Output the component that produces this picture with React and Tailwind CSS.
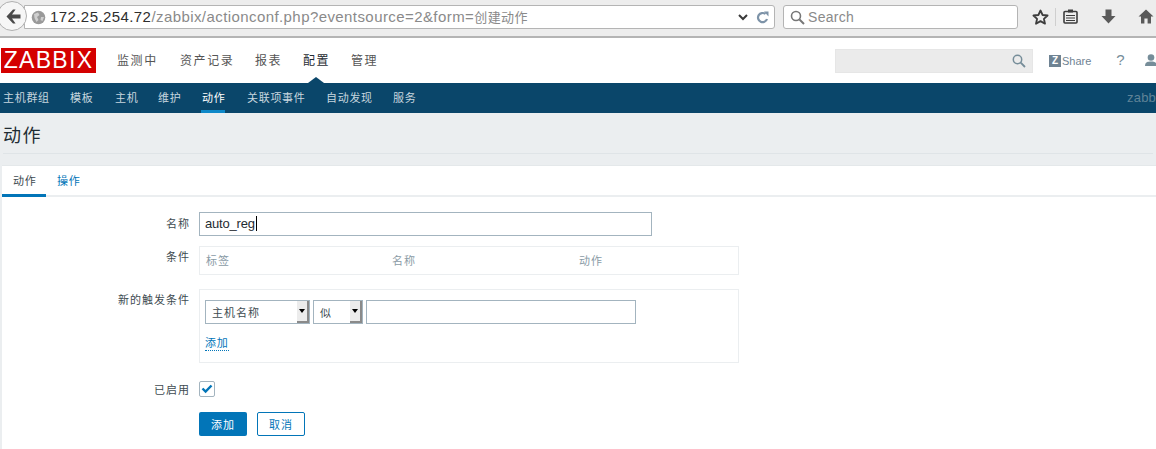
import React from 'react';

const cjk = { fontFamily: '"Noto Sans CJK SC", sans-serif' };

const mainMenu = [
  { label: '监测中', w: 'w-[63px]' },
  { label: '资产记录', w: 'w-[75px]' },
  { label: '报表', w: 'w-[48px]' },
  { label: '配置', w: 'w-[48px]', active: true },
  { label: '管理', w: 'w-[48px]' },
];

const subMenu = [
  { label: '主机群组', w: 'w-[67px]' },
  { label: '模板', w: 'w-[45px]' },
  { label: '主机', w: 'w-[43px]' },
  { label: '维护', w: 'w-[44px]' },
  { label: '动作', w: 'w-[45px]', active: true },
  { label: '关联项事件', w: 'w-[79px]' },
  { label: '自动发现', w: 'w-[67px]' },
  { label: '服务', w: 'w-[40px]' },
];

function Toolbar() {
  return (
    <div className="flex h-[38px] items-start border-b-2 border-[#b4b4b4] bg-[#ededed]">
      {/* back button */}
      <div className="z-10 -ml-[3px] mt-[1px] flex h-[30px] w-[30px] shrink-0 items-center justify-center rounded-full border border-[#b0b0b0] bg-[#f6f6f6]">
        <svg width="15" height="15" viewBox="0 0 15 15" className="ml-[3px]">
          <path d="M7 0.5 L0.5 7.5 L7 14.5 L9.6 14.5 L6 9.5 L14.5 9.5 L14.5 5.5 L6 5.5 L9.6 0.5 Z" fill="#4a4a4a" />
        </svg>
      </div>
      {/* url bar */}
      <div className="-ml-[3px] mt-[5px] flex h-[24px] w-[751px] shrink-0 items-center rounded-r-[3px] border border-[#b4b4b4] bg-white pl-[5px] pr-[3px]">
        <svg width="15" height="15" viewBox="0 0 15 15" className="ml-[1px] shrink-0">
          <circle cx="7.5" cy="7.5" r="6.8" fill="#9a9a9a" />
          <path d="M3 4 L7 2.5 L8.5 5 L6 7 L7.5 10 L5.5 12 L3.5 8 Z M10 7 L13 7 L11.5 11 L9.5 10 Z" fill="#cfcfcf" />
        </svg>
        <div className="ml-[4px] flex-1 whitespace-nowrap text-[15px] tracking-[0.42px] text-[#8a8a8a]" style={{ fontFamily: '"Liberation Sans", "Noto Sans CJK SC", sans-serif' }}>
          <span className="text-[#2e2e2e]">172.25.254.72</span>/zabbix/actionconf.php?eventsource=2&amp;form=<span className="text-[13px]">创建动作</span>
        </div>
        <svg width="10" height="7" viewBox="0 0 10 7" className="mr-[8px] shrink-0">
          <path d="M1 1 L5 5 L9 1" fill="none" stroke="#3a3a3a" strokeWidth="2" />
        </svg>
        <svg width="13" height="13" viewBox="0 0 13 13" className="mr-[2px] shrink-0">
          <path d="M11 8 A4.6 4.6 0 1 1 9.5 3" fill="none" stroke="#7d93a8" strokeWidth="2.2" />
          <path d="M8 0.5 L12.5 0.5 L12.5 5.5 Z" fill="#7d93a8" />
        </svg>
      </div>
      {/* search */}
      <div className="ml-[8px] mt-[5px] flex h-[24px] w-[235px] shrink-0 items-center rounded-[3px] border border-[#b4b4b4] bg-white pl-[6px]">
        <svg width="15" height="15" viewBox="0 0 15 15" className="shrink-0">
          <circle cx="6" cy="6" r="4.5" fill="none" stroke="#777" strokeWidth="1.6" />
          <path d="M9.5 9.5 L14 14" stroke="#777" strokeWidth="2" />
        </svg>
        <span className="ml-[3px] text-[14px] tracking-[0.3px] text-[#8a8a8a]" style={{ fontFamily: '"Liberation Sans", sans-serif' }}>Search</span>
      </div>
      {/* toolbar icons */}
      <svg width="17" height="16" viewBox="0 0 17 16" className="ml-[14px] mt-[9px] shrink-0">
        <path d="M8.5 1.5 L10.6 6 L15.6 6.5 L11.9 9.8 L13 14.7 L8.5 12.1 L4 14.7 L5.1 9.8 L1.4 6.5 L6.4 6 Z" fill="none" stroke="#3c3c3c" strokeWidth="1.8" strokeLinejoin="round" />
      </svg>
      <div className="ml-[6px] mt-[8px] h-[18px] w-px shrink-0 bg-[#cfcfcf]" />
      <svg width="15" height="15" viewBox="0 0 15 15" className="ml-[7px] mt-[9px] shrink-0">
        <rect x="1" y="2.5" width="13" height="11.5" rx="1" fill="none" stroke="#3c3c3c" strokeWidth="1.6" />
        <rect x="5" y="0.5" width="5" height="3" fill="#3c3c3c" />
        <path d="M3 6.5 H12 M3 9 H12 M3 11.5 H12" stroke="#3c3c3c" strokeWidth="1.2" />
      </svg>
      <svg width="15" height="15" viewBox="0 0 15 15" className="ml-[23px] mt-[9px] shrink-0">
        <path d="M4.5 0.5 H10.5 V7 H14.5 L7.5 14.5 L0.5 7 H4.5 Z" fill="#5a5a5a" />
      </svg>
      <svg width="16" height="15" viewBox="0 0 16 15" className="ml-[22px] mt-[9px] shrink-0">
        <path d="M8 0.5 L15.5 7.5 L13 7.5 L13 14.5 L9.6 14.5 L9.6 9.5 L6.4 9.5 L6.4 14.5 L3 14.5 L3 7.5 L0.5 7.5 Z" fill="#5a5a5a" />
      </svg>
    </div>
  );
}

function TopHeader() {
  return (
    <div className="flex h-[45px] items-start bg-white">
      <div className="ml-[1px] mt-[10px] flex h-[25px] w-[95px] shrink-0 items-center justify-center bg-[#d40000] text-[23px] leading-none tracking-[1.3px] text-white" style={{ fontFamily: '"Liberation Sans", sans-serif' }}>
        ZABBIX
      </div>
      <div className="ml-[21px] mt-[10px] flex h-[35px] shrink-0">
        {mainMenu.map((m) => (
          <div key={m.label} className={`relative ${m.w} pt-[3px] text-[12px] leading-[18px] tracking-[1.6px] ${m.active ? 'text-[#1f2c33]' : 'text-[#555]'}`} style={cjk}>
            {m.label}
            {m.active && (
              <div className="absolute bottom-0 left-[5px] h-0 w-0 border-x-[8px] border-b-[6px] border-x-transparent border-b-[#0a466a]" />
            )}
          </div>
        ))}
      </div>
      <div className="ml-[436px] mt-[11px] flex h-[24px] w-[198px] shrink-0 items-center justify-end border border-[#e6e6e6] bg-[#ebebeb] pr-[6px]">
        <svg width="14" height="14" viewBox="0 0 14 14">
          <circle cx="5.5" cy="5.5" r="4.2" fill="none" stroke="#768d99" strokeWidth="1.5" />
          <path d="M8.7 8.7 L13 13" stroke="#768d99" strokeWidth="1.8" />
        </svg>
      </div>
      <div className="ml-[16px] mt-[14px] flex h-[18px] shrink-0 items-center" style={{ fontFamily: '"Liberation Sans", sans-serif' }}>
        <div className="flex h-[12px] w-[12px] items-center justify-center bg-[#6f8393] text-[10px] font-bold leading-none text-white">Z</div>
        <span className="ml-[1px] text-[11px] text-[#6f8393]">Share</span>
      </div>
      <div className="ml-[25px] mt-[12px] shrink-0 text-[15px] leading-[20px] text-[#768d99]" style={{ fontFamily: '"Liberation Sans", sans-serif' }}>?</div>
      <svg width="12" height="13" viewBox="0 0 12 13" className="ml-[20px] mt-[16px] shrink-0">
        <circle cx="6" cy="3.5" r="3.3" fill="#768d99" />
        <path d="M0 12 C0 8 3 7.5 6 7.5 C9 7.5 12 8 12 12 Z" fill="#768d99" />
      </svg>
    </div>
  );
}

function SubNav() {
  return (
    <div className="flex h-[30px] items-stretch justify-between bg-[#0a466a]">
      <div className="ml-[3px] flex shrink-0">
        {subMenu.map((m) => (
          <div key={m.label} className={`${m.w} whitespace-nowrap pt-[6px] text-[11px] leading-[16px] tracking-[0.7px] ${m.active ? 'text-white' : 'text-[#c7d6df]'}`} style={cjk}>
            <span className={`inline-block ${m.active ? '-ml-[1px] h-[24px] w-[24px] border-b-[3px] border-[#0e88c8] pl-[1px]' : ''}`}>{m.label}</span>
          </div>
        ))}
      </div>
      <div className="shrink-0 whitespace-nowrap pt-[7px] text-[13px] leading-[16px] tracking-[0.2px] text-[#5f8397]" style={{ fontFamily: '"Liberation Sans", sans-serif' }}>zabb</div>
    </div>
  );
}

function Row({ label, labelClass, children, className }) {
  return (
    <div className={`flex items-start ${className || ''}`}>
      <div className={`w-[188px] shrink-0 text-right text-[11px] leading-[16px] tracking-[1px] text-[#404b51] ${labelClass || ''}`} style={cjk}>{label}</div>
      <div className="ml-[9px] min-w-0">{children}</div>
    </div>
  );
}

function Select({ label, w }) {
  return (
    <div className={`flex h-[24px] ${w} items-stretch border border-[#a3b4bf] bg-white`}>
      <div className="flex-1 pl-[6px] text-[11px] leading-[22px] tracking-[1px] text-[#404b51]" style={cjk}>{label}</div>
      <div className="flex w-[12px] items-center justify-center border-r-2 border-b-2 border-[#8a8a8a] bg-[#ececec]">
        <div className="h-0 w-0 border-x-[3px] border-t-[4px] border-x-transparent border-t-black" />
      </div>
    </div>
  );
}

function ActionForm() {
  return (
    <div className="ml-[2px] border-t border-[#e4e8ea] bg-white">
      <div className="flex h-[31px] border-b-2 border-[#ebeef0] text-[11px] leading-[16px] tracking-[0.8px]" style={cjk}>
        <div className="h-[31px] w-[44px] border-b-[3px] border-[#0275b8] pl-[11px] pt-[6px] text-[#404b51]">动作</div>
        <div className="pl-[11px] pt-[6px] text-[#0275b8]">操作</div>
      </div>
      <div className="h-[252px] pt-[15px]">
        <Row label="名称" labelClass="pt-[3px]">
          <div className="h-[24px] w-[453px] border border-[#a3b4bf] pl-[5px] text-[13px] leading-[22px] tracking-[-0.2px] text-[#1f2c33]" style={{ fontFamily: '"Liberation Sans", sans-serif' }}>
            auto_reg<span className="ml-px inline-block h-[15px] w-px translate-y-[3px] bg-black" />
          </div>
        </Row>
        <Row label="条件" labelClass="pt-[2px]" className="mt-[10px]">
          <div className="flex h-[29px] w-[540px] border border-[#ebeef0] pl-[6px] pt-[5px] text-[11px] leading-[16px] tracking-[1px] text-[#8a9ba6]" style={cjk}>
            <span className="w-[186px]">标签</span>
            <span className="w-[187px]">名称</span>
            <span>动作</span>
          </div>
        </Row>
        <Row label="新的触发条件" labelClass="pt-[2px]" className="mt-[14px]">
          <div className="h-[74px] w-[540px] border border-[#ebeef0] pl-[5px] pt-[10px]">
            <div className="flex gap-[3px]">
              <Select label="主机名称" w="w-[105px]" />
              <Select label="似" w="w-[50px]" />
              <div className="h-[24px] w-[270px] border border-[#a3b4bf]" />
            </div>
            <span className="mt-[10px] inline-block border-b border-dotted border-[#0275b8] text-[11px] leading-[16px] tracking-[0.8px] text-[#0275b8]" style={cjk}>添加</span>
          </div>
        </Row>
        <Row label="已启用" className="mt-[18px]">
          <div className="flex h-[16px] w-[16px] items-center justify-center rounded-[2px] border border-[#a3b4bf]">
            <svg width="12" height="10" viewBox="0 0 12 10">
              <path d="M1.5 4.5 L4.6 7.6 L10.5 1.5" fill="none" stroke="#0275b8" strokeWidth="2.4" />
            </svg>
          </div>
        </Row>
        <div className="ml-[197px] mt-[15px] flex gap-[10px] text-[11px] tracking-[1px]" style={cjk}>
          <div className="flex h-[24px] w-[48px] items-center justify-center rounded-[2px] bg-[#0275b8] text-white">添加</div>
          <div className="flex h-[24px] w-[48px] items-center justify-center rounded-[2px] border border-[#0275b8] text-[#0275b8]">取消</div>
        </div>
      </div>
    </div>
  );
}

export default function App() {
  return (
    <div className="h-[449px] w-[1156px] overflow-hidden bg-[#ebeef0]">
      <Toolbar />
      <TopHeader />
      <SubNav />
      <div className="mx-[3px] h-[41px] border-b border-[#dfe4e7] pt-[8px] text-[18px] leading-[26px] tracking-[1.5px] text-[#1f2c33]" style={cjk}>动作</div>
      <div className="h-[11px]" />
      <ActionForm />
    </div>
  );
}
